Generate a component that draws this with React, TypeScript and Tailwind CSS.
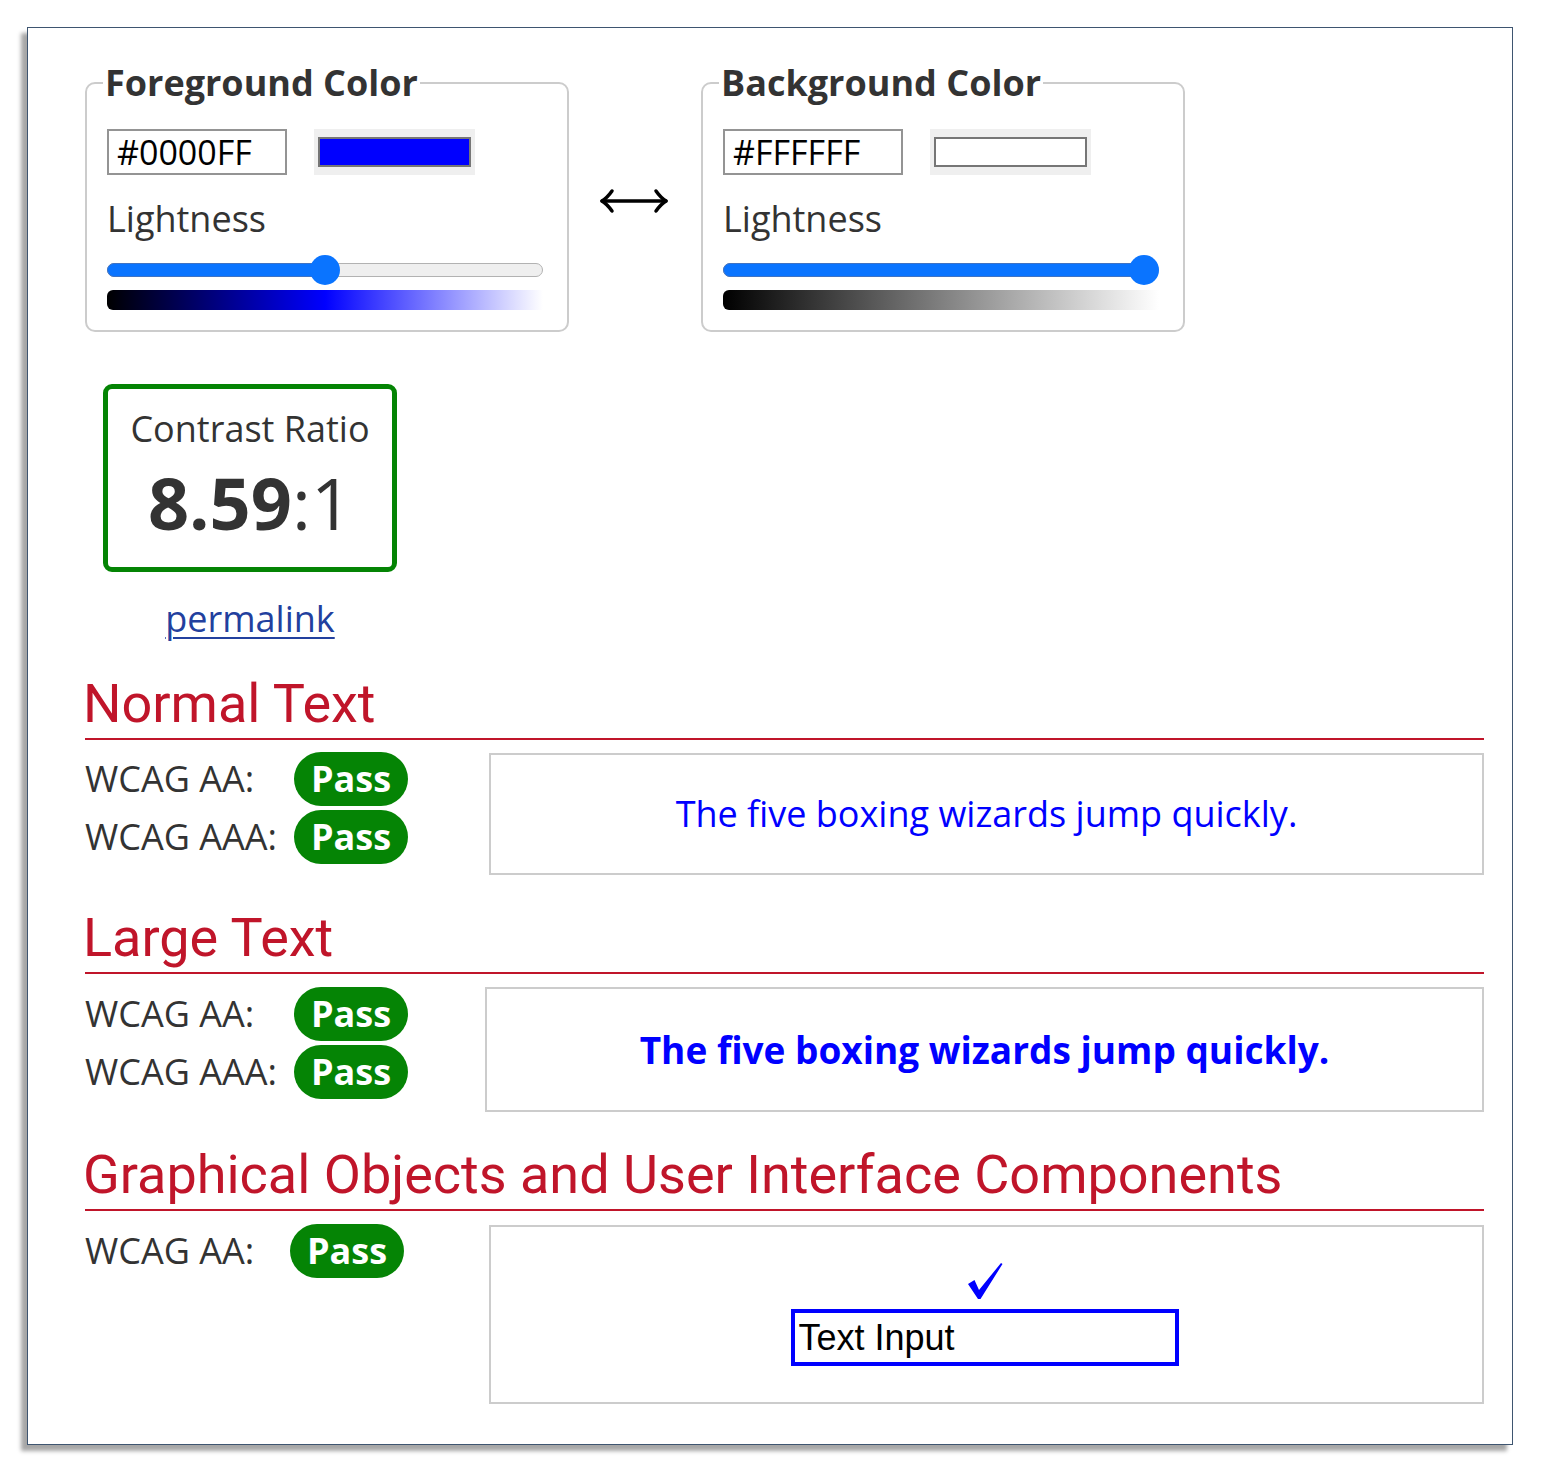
import React from "react";

const sans = "font-['Open_Sans','Noto_Sans',sans-serif]";
const roboto = "font-['Roboto','Noto_Sans',sans-serif]";

type ColorBoxProps = {
  title: string;
  hex: string;
  swatch: string;
  gradient: string;
  value: number;
};

const Slider: React.FC<{ value: number }> = ({ value }) => {
  // thumb center travels from 15px to (width - 15px)
  const pos = 15 + value * (436 - 30);
  return (
    <div className="relative w-[436px] h-[30px] mt-[13px]">
      <div className="absolute left-0 right-0 top-[8px] h-[14px] rounded-full bg-[#efefef] border border-[#b2b2b2]" />
      <div
        className="absolute left-0 top-[8px] h-[14px] rounded-full bg-[#0a74ff] border border-[#3f73c4]"
        style={{ width: pos + 4 }}
      />
      <div
        className="absolute top-0 w-[30px] h-[30px] rounded-full bg-[#0a74ff]"
        style={{ left: pos - 15 }}
      />
    </div>
  );
};

const ColorBox: React.FC<ColorBoxProps> = ({ title, hex, swatch, gradient, value }) => (
  <fieldset className="w-[482px] border-2 border-[#cccccc] rounded-[10px] pl-[20px] pr-[24px] pt-[23px] pb-[20px] m-0">
    <legend className={`${sans} font-bold text-[36px] leading-[46px] text-[#333] px-[2px] -ml-[4px]`}>
      {title}
    </legend>
    <div className="flex items-center">
      <div className="w-[180px] h-[46px] border-2 border-[#949494] flex items-center px-[8px]">
        <span className={`${sans} text-[34px] text-black leading-none`}>{hex}</span>
      </div>
      <div className="ml-[27px] w-[161px] h-[46px] bg-[#efefef] px-[4px] py-[8px]">
        <div className={`w-full h-full border-2 border-[#767676] ${swatch}`} />
      </div>
    </div>
    <div className={`${sans} text-[36px] leading-[46px] text-[#333] mt-[21px]`}>Lightness</div>
    <Slider value={value} />
    <div className={`w-[436px] h-[20px] mt-[5px] rounded-l-[6px] ${gradient}`} />
  </fieldset>
);

const PassPill: React.FC = () => (
  <div className={`w-[114px] h-[54px] rounded-full bg-[#058405] flex items-center justify-center ${sans} font-bold text-[36px] text-white leading-none`}>
    Pass
  </div>
);

const Row: React.FC<{ label: string; labelW: string }> = ({ label, labelW }) => (
  <div className="flex items-center">
    <div className={`${labelW} ${sans} text-[36px] text-[#333] leading-[46px]`}>{label}</div>
    <PassPill />
  </div>
);

const Heading: React.FC<{ children: React.ReactNode; className?: string }> = ({ children, className }) => (
  <h2 className={`${roboto} text-[54px] leading-[64px] font-normal text-[#c0152a] border-b-2 border-[#c0152a] pb-[2px] indent-[-2px] ${className ?? ""}`}>
    {children}
  </h2>
);

export default function App() {
  return (
    <div className="bg-white w-[1541px] h-[1473px] pt-[27px] pl-[27px]">
      <div className="w-[1486px] h-[1418px] border border-[#3e5570] bg-white shadow-[-6px_6px_4px_rgba(0,0,0,0.35)] pl-[57px] pr-[28px] pt-[32px]">
        {/* Color pickers */}
        <div className="flex items-center">
          <ColorBox
            title="Foreground Color"
            hex="#0000FF"
            swatch="bg-[#0000ff]"
            gradient="bg-[linear-gradient(to_right,#000000,#0000ff_50%,#ffffff)]"
            value={0.5}
          />
          <div className="w-[132px] flex justify-center pt-[10px] pr-[2px]">
            <svg width="70" height="28" viewBox="0 0 70 28" fill="none" stroke="black" strokeWidth="3.5" strokeLinecap="round" strokeLinejoin="round">
              <path d="M3 14 H67" />
              <path d="M13 4 Q8 11 3 14 Q8 17 13 24" />
              <path d="M57 4 Q62 11 67 14 Q62 17 57 24" />
            </svg>
          </div>
          <ColorBox
            title="Background Color"
            hex="#FFFFFF"
            swatch="bg-white"
            gradient="bg-[linear-gradient(to_right,#000000,#ffffff)]"
            value={1}
          />
        </div>

        {/* Contrast ratio */}
        <div className="ml-[18px] w-[294px] mt-[52px]">
          <div className="h-[188px] border-[5px] border-[#048404] rounded-[9px] flex flex-col items-center pt-[17px]">
            <div className={`${sans} text-[36px] leading-[46px] text-[#333]`}>Contrast Ratio</div>
            <div className={`${sans} text-[72px] leading-[80px] text-[#333] mt-[10px]`}>
              <span className="font-bold">8.59</span>:1
            </div>
          </div>
          <div className="text-center mt-[24px]">
            <a href="#" className={`${sans} text-[36px] leading-[46px] text-[#22409e] underline underline-offset-[5px] decoration-2`}>
              permalink
            </a>
          </div>
        </div>

        {/* Normal text */}
        <Heading className="mt-[30px]">Normal Text</Heading>
        <div className="flex">
          <div className="w-[404px] flex flex-col gap-[4px] mt-[12px]">
            <Row label="WCAG AA:" labelW="w-[209px]" />
            <Row label="WCAG AAA:" labelW="w-[209px]" />
          </div>
          <div className="flex-1 h-[122px] mt-[13px] border-2 border-[#cccccc] flex items-center justify-center">
            <p className={`${sans} text-[36px] text-[#0000ff] leading-[46px]`}>The five boxing wizards jump quickly.</p>
          </div>
        </div>

        {/* Large text */}
        <Heading className="mt-[31px]">Large Text</Heading>
        <div className="flex">
          <div className="w-[400px] flex flex-col gap-[4px] mt-[13px]">
            <Row label="WCAG AA:" labelW="w-[209px]" />
            <Row label="WCAG AAA:" labelW="w-[209px]" />
          </div>
          <div className="flex-1 h-[125px] mt-[13px] border-2 border-[#cccccc] flex items-center justify-center">
            <p className={`${sans} font-bold text-[37px] text-[#0000ff] leading-[48px]`}>The five boxing wizards jump quickly.</p>
          </div>
        </div>

        {/* Graphical objects */}
        <Heading className="mt-[31px]">Graphical Objects and User Interface Components</Heading>
        <div className="flex">
          <div className="w-[404px] mt-[13px]">
            <Row label="WCAG AA:" labelW="w-[205px]" />
          </div>
          <div className="flex-1 h-[179px] mt-[14px] border-2 border-[#cccccc] flex flex-col items-center pt-[34px]">
            <svg width="40" height="40" viewBox="0 0 40 40" className="ml-[-4px]">
              <path d="M3 23 L9.5 19 L14 29 L36 2 L37.5 3 L15.5 38 L13 38 Z" fill="#0000ff" />
            </svg>
            <div className="mt-[8px] -ml-[4px] w-[388px] h-[57px] border-4 border-[#0000ff] flex items-center px-[4px]">
              <span className="font-['Liberation_Sans',Arial,sans-serif] text-[36px] text-black leading-none">Text Input</span>
            </div>
          </div>
        </div>
      </div>
    </div>
  );
}
